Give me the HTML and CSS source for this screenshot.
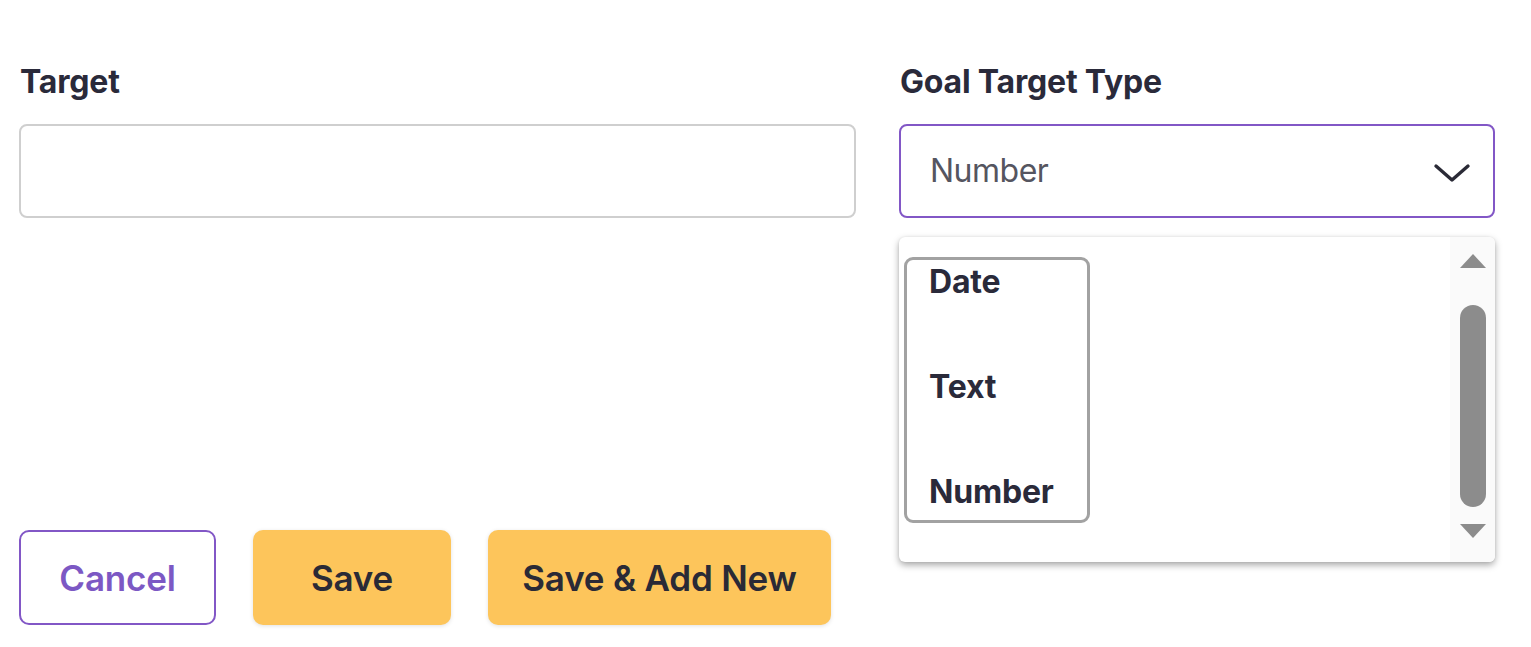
FILE: index.html
```html
<!DOCTYPE html>
<html>
<head>
<meta charset="utf-8">
<link rel="stylesheet" href="styles.css">
</head>
<body>
<div class="page">
  <div class="form-row">
    <div class="field field-left">
      <label class="label">Target</label>
      <div class="input"></div>
    </div>
    <div class="field field-right">
      <label class="label">Goal Target Type</label>
      <div class="select">
        <span class="select-value">Number</span>
        <svg class="chevron" width="38" height="22" viewBox="0 0 38 22"><path d="M3 4 L19 18 L35 4" fill="none" stroke="#2a2a36" stroke-width="3.4" stroke-linecap="round" stroke-linejoin="round"/></svg>
      </div>
      <div class="listbox">
        <div class="options">
          <div class="focus-box">
            <div class="option">Date</div>
            <div class="option">Text</div>
            <div class="option">Number</div>
          </div>
        </div>
        <div class="scrollbar">
          <svg class="arrow" width="28" height="16" viewBox="0 0 28 16"><path d="M14 1 L27 15 L1 15 Z" fill="#8c8c8c"/></svg>
          <div class="thumb"></div>
          <svg class="arrow" width="28" height="16" viewBox="0 0 28 16"><path d="M1 1 L27 1 L14 15 Z" fill="#8c8c8c"/></svg>
        </div>
      </div>
    </div>
  </div>
  <div class="actions">
    <button class="btn btn-outline">Cancel</button>
    <button class="btn btn-primary btn-save">Save</button>
    <button class="btn btn-primary btn-save-new">Save &amp; Add New</button>
  </div>
</div>
</body>
</html>
```

FILE: styles.css
```css
html, body {
  margin: 0;
  padding: 0;
  background: #ffffff;
}
body {
  font-family: Inter, "DejaVu Sans", sans-serif;
  color: #2a2a3a;
}
.page {
  width: 1531px;
  height: 647px;
  box-sizing: border-box;
  padding: 64px 36px 0 19px;
  display: flex;
  flex-direction: column;
}
.form-row {
  display: flex;
  gap: 43px;
}
.field {
  display: flex;
  flex-direction: column;
  position: relative;
}
.field-left { width: 837px; }
.field-right { width: 596px; }
.label {
  display: block;
  font-size: 32px;
  font-weight: 700;
  line-height: 36px;
  padding-left: 1px;
  letter-spacing: -0.2px;
  color: #2a2a3a;
  margin-bottom: 24px;
}
.input {
  height: 94px;
  box-sizing: border-box;
  border: 2px solid #cfcfcf;
  border-radius: 8px;
  background: #fff;
}
.select {
  height: 94px;
  box-sizing: border-box;
  border: 2px solid #8257c6;
  border-radius: 8px;
  display: flex;
  align-items: center;
  justify-content: space-between;
  padding: 0 22px 0 29px;
}
.select-value {
  font-size: 32px;
  font-weight: 400;
  color: #555560;
  letter-spacing: -0.5px;
  margin-top: -2px;
}
.chevron { display: block; margin-top: 4px; }
.listbox {
  position: absolute;
  top: 173px;
  left: 0;
  width: 596px;
  height: 325px;
  background: #fff;
  border-radius: 6px;
  box-shadow: 0 3px 7px rgba(0,0,0,0.35), 0 0 2px rgba(0,0,0,0.08);
  display: flex;
  overflow: hidden;
}
.options {
  flex: 1;
  padding: 20px 0 0 5px;
}
.focus-box {
  width: 186px;
  box-sizing: border-box;
  border: 3px solid #a2a2a2;
  border-radius: 9px;
  padding: 6px 0 12px 22px;
  display: flex;
  flex-direction: column;
  gap: 73px;
}
.option {
  font-size: 32px;
  font-weight: 700;
  line-height: 32px;
  letter-spacing: -0.2px;
  color: #2a2a3a;
}
.scrollbar {
  width: 45px;
  background: #fafafa;
  display: flex;
  flex-direction: column;
  align-items: center;
  padding: 16px 0 22px;
  box-sizing: border-box;
}
.arrow { display: block; }
.thumb {
  width: 26px;
  height: 202px;
  border-radius: 13px;
  background: #8c8c8c;
  margin: 36px 0 16px;
}
.actions {
  display: flex;
  gap: 37px;
  margin-top: 312px;
}
.btn {
  height: 95px;
  box-sizing: border-box;
  border-radius: 10px;
  font-family: Inter, "DejaVu Sans", sans-serif;
  font-size: 35px;
  font-weight: 600;
  letter-spacing: -0.2px;
  padding: 0;
  cursor: pointer;
}
.btn-outline {
  width: 197px;
  background: #fff;
  border: 2px solid #8257c6;
  color: #7c58c4;
}
.btn-primary {
  background: #fdc55b;
  border: none;
  color: #2a2a36;
  box-shadow: 0 1px 4px rgba(0,0,0,0.12);
}
.btn-save { width: 198px; }
.btn-save-new { width: 343px; }
```
